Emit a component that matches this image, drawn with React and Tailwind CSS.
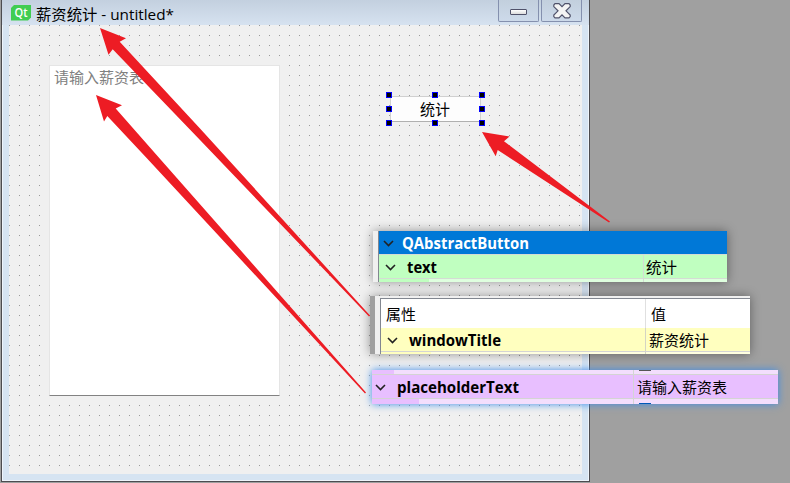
import React from "react";

const FONT = "font-['Open_Sans','Noto_Sans_CJK_SC',sans-serif]";

function Text({ children, w, x, y, bold, className = "" }) {
  return (
    <svg className={`block h-full w-full overflow-visible ${className}`}>
      <text
        x={x}
        y={y}
        textLength={w}
        lengthAdjust="spacingAndGlyphs"
        fill="currentColor"
        className={bold ? "text-[16px] font-bold" : ""}
      >
        {children}
      </text>
    </svg>
  );
}

function Chevron() {
  return (
    <svg width="11" height="7" viewBox="0 0 11 7" className="mt-[2px] shrink-0">
      <path d="M1 1 L5.5 5.5 L10 1" fill="none" stroke="#222" strokeWidth="1.6" />
    </svg>
  );
}

function Handle({ className }) {
  return (
    <span className={`absolute h-[6px] w-[6px] border border-[#0000ff] bg-black ${className}`} />
  );
}

function Titlebar() {
  return (
    <header className="flex h-[25px] shrink-0 bg-gradient-to-b from-[#c3d0df] to-[#d6e2f0] pl-[9px]">
      <svg width="20" height="20" viewBox="0 0 20 20" className="mt-[5px] shrink-0 overflow-visible">
        <path d="M3 0H20V12.5L17 15.500H0V3Z" fill="#41cd52" />
        <text x="3.500" y="12" textLength="13" lengthAdjust="spacingAndGlyphs" fill="#fff" className="text-[13px] font-semibold">
          Qt
        </text>
      </svg>
      <div className="ml-[5px] h-[25px] w-[140px] text-[15px] text-black">
        <Text x={0} y={20} w={138}>薪资统计 - untitled*</Text>
      </div>
      <div className="ml-auto flex gap-[2px] pr-[7px]">
        <div className="flex h-[22px] w-[41px] justify-center rounded-b-[2px] border border-t-0 border-[#8490ae] bg-gradient-to-b from-[#c2cfdd] to-[#cddaea]">
          <div className="mt-[9px] h-[6px] w-[17px] rounded-[1px] border border-[#50526a] bg-gradient-to-b from-white to-[#dcdcdc]" />
        </div>
        <div className="flex h-[22px] w-[41px] justify-center rounded-b-[2px] border border-t-0 border-[#8490ae] bg-gradient-to-b from-[#c2cfdd] to-[#cddaea]">
          <svg width="18" height="16" viewBox="0 0 18 16" className="mt-[3px]">
            <path
              d="M2 .7H6L9 3.700L12 .7H16L17.2 2V3.6L13 7.8L17.2 12V13.6L16 14.9H12L9 11.900L6 14.9H2L.8 13.6V12L5 7.8L.8 3.6V2Z"
              fill="#f4f4f4"
              stroke="#50526a"
              strokeWidth="1.2"
            />
          </svg>
        </div>
      </div>
    </header>
  );
}

function FormWindow() {
  return (
    <div className="flex h-[482px] w-[589px] flex-col border-x border-b border-[#4c4c50] bg-[#d6e4f2] shadow-[inset_1px_-1px_0_#eef4fb,inset_-1px_0_0_#eef4fb]">
      <Titlebar />
      <main className="ml-[7px] flex h-[449px] w-[573px] bg-[#f0f0f0]">
        <div className="relative flex h-full w-full items-start">
          <svg className="absolute inset-0 h-full w-full">
            <defs>
              <pattern id="grid" width="10" height="10" patternUnits="userSpaceOnUse">
                <rect width="1" height="1" fill="#9a9a9a" />
              </pattern>
            </defs>
            <rect width="573" height="449" fill="url(#grid)" />
          </svg>
          <div className="relative ml-[40px] mt-[40px] h-[331px] w-[231px] border border-[#e5e5e5] border-b-[#828282] bg-white text-[15px] text-[#808080]">
            <Text x={4} y={16.5} w={90}>请输入薪资表</Text>
          </div>
          <div className="relative ml-[110px] mt-[71px] h-[26px] w-[91px] border border-[#d0d0d0] border-b-[#b0b0b0] bg-[#fdfdfd] text-[15px] text-black">
            <Text x={29} y={17.5} w={30}>统计</Text>
            <Handle className="-left-[5px] -top-[5px]" />
            <Handle className="left-[41px] -top-[5px]" />
            <Handle className="left-[88px] -top-[5px]" />
            <Handle className="-left-[5px] top-[9px]" />
            <Handle className="left-[88px] top-[9px]" />
            <Handle className="-left-[5px] top-[23px]" />
            <Handle className="left-[41px] top-[23px]" />
            <Handle className="left-[88px] top-[23px]" />
          </div>
        </div>
      </main>
    </div>
  );
}

function ButtonProperties() {
  return (
    <section className="absolute left-[373px] top-[231px] flex h-[51px] w-[354px] shadow-[0_0_10px_rgba(0,0,0,0.4)]">
      <div className="w-[6px] border-r border-[#828790] bg-[#f0f0f0]" />
      <div className="flex flex-1 flex-col">
        <div className="flex h-[23px] items-center bg-[#0078d7] pl-[4px] text-white">
          <Chevron />
          <div className="ml-[8px] h-[23px] w-[128px]">
            <Text bold x={0} y={18} w={127}>QAbstractButton</Text>
          </div>
        </div>
        <div className="flex h-[25px] border-y border-[#d4dcd4] bg-[#c0ffc0]">
          <div className="flex w-[265px] items-center border-r border-[#d4dcd4] pl-[6px]">
            <Chevron />
            <div className="ml-[11px] h-[23px] w-[60px]">
              <Text bold x={0} y={18} w={30}>text</Text>
            </div>
          </div>
          <div className="h-[23px] flex-1"><Text x={2} y={18} w={31}>统计</Text></div>
        </div>
        <div className="flex h-[3px] bg-[#dfffdf]">
          <div className="w-[50px] bg-[#c0ffc0]" />
          <div className="w-[215px] border-r border-[#d4dcd4]" />
        </div>
      </div>
    </section>
  );
}

function WindowProperties() {
  return (
    <section className="absolute left-[370px] top-[296px] flex h-[58px] w-[380px] shadow-[0_0_10px_rgba(0,0,0,0.4)]">
      <div className="w-[5px] bg-[#a0a0a0]" />
      <div className="w-[5px] bg-[#f0f0f0]" />
      <div className="flex flex-1 flex-col">
        <div className="h-[2px] bg-[#f0f0f0]" />
        <div className="flex flex-1 flex-col border-l border-t border-[#828790] bg-white">
          <div className="flex h-[29px]">
            <div className="w-[265px] border-r border-[#e0e0e0]"><Text x={5} y={21} w={30}>属性</Text></div>
            <div className="flex-1"><Text x={5} y={21} w={15}>值</Text></div>
          </div>
          <div className="flex h-[24px] border-b border-[#d4d4d4] bg-[#ffffbf]">
            <div className="flex w-[265px] items-center border-r border-[#d4d4c4] pl-[6px]">
              <Chevron />
              <div className="ml-[11px] h-[23px] w-[100px]"><Text bold x={0} y={18} w={92}>windowTitle</Text></div>
            </div>
            <div className="flex-1"><Text x={3} y={18} w={60}>薪资统计</Text></div>
          </div>
          <div className="flex h-[2px] bg-[#ffffdf]">
            <div className="w-[50px] bg-[#ffffbf]" />
            <div className="w-[215px] border-r border-[#d4d4c4]" />
          </div>
        </div>
      </div>
    </section>
  );
}

function PlaceholderProperties() {
  return (
    <section className="absolute left-[372px] top-[370px] flex h-[34px] w-[406px] flex-col shadow-[0_0_8px_#3c8ce8]">
      <div className="flex h-[4px] bg-[#f3defd]">
        <div className="w-[22px] bg-[#e8bfff]" />
        <div className="w-[240px] border-r border-[#d4d4d4]" />
        <div className="ml-[5px] h-[1px] w-[12px] bg-[#555]" />
      </div>
      <div className="flex h-[25px] border-y border-[#d4d4d4] bg-[#e8bfff]">
        <div className="flex w-[262px] items-center border-r border-[#d4d4d4] pl-[3px]">
          <Chevron />
          <div className="ml-[11px] h-[23px] w-[130px]"><Text bold x={0} y={18} w={122}>placeholderText</Text></div>
        </div>
        <div className="flex-1"><Text x={3} y={18} w={90}>请输入薪资表</Text></div>
      </div>
      <div className="flex h-[5px] bg-[#f3defd]">
        <div className="h-full w-[47px] bg-[#e8bfff]" />
        <div className="h-full w-[215px] border-r border-[#d4d4d4]" />
        <div className="ml-[5px] mt-[4px] h-[1px] w-[12px] bg-[#0058b8]" />
      </div>
    </section>
  );
}

function Arrows() {
  return (
    <svg className="pointer-events-none absolute inset-0" width="790" height="483" fill="#ed1c24">
      <path d="M100 28L126 38.300L119.700 41.700L200 128.500L370 315.500L369 316.500L200 140L112.700 49.300L108.500 54.700Z" />
      <path d="M96 95L122 105.300L115.700 108.500L161 160L366 392.500L365 393.500L148.500 160L107.300 116L104 121.500Z" />
      <path d="M482 132L509.500 136.600L504 141.200L610 221.500L609 222.500L497.700 150L495.700 156.300Z" />
    </svg>
  );
}

export default function App() {
  return (
    <div className={`relative h-[483px] w-[790px] overflow-hidden bg-[#a0a0a0] pl-px text-[15px] text-black ${FONT}`}>
      <FormWindow />
      <ButtonProperties />
      <WindowProperties />
      <PlaceholderProperties />
      <Arrows />
    </div>
  );
}
